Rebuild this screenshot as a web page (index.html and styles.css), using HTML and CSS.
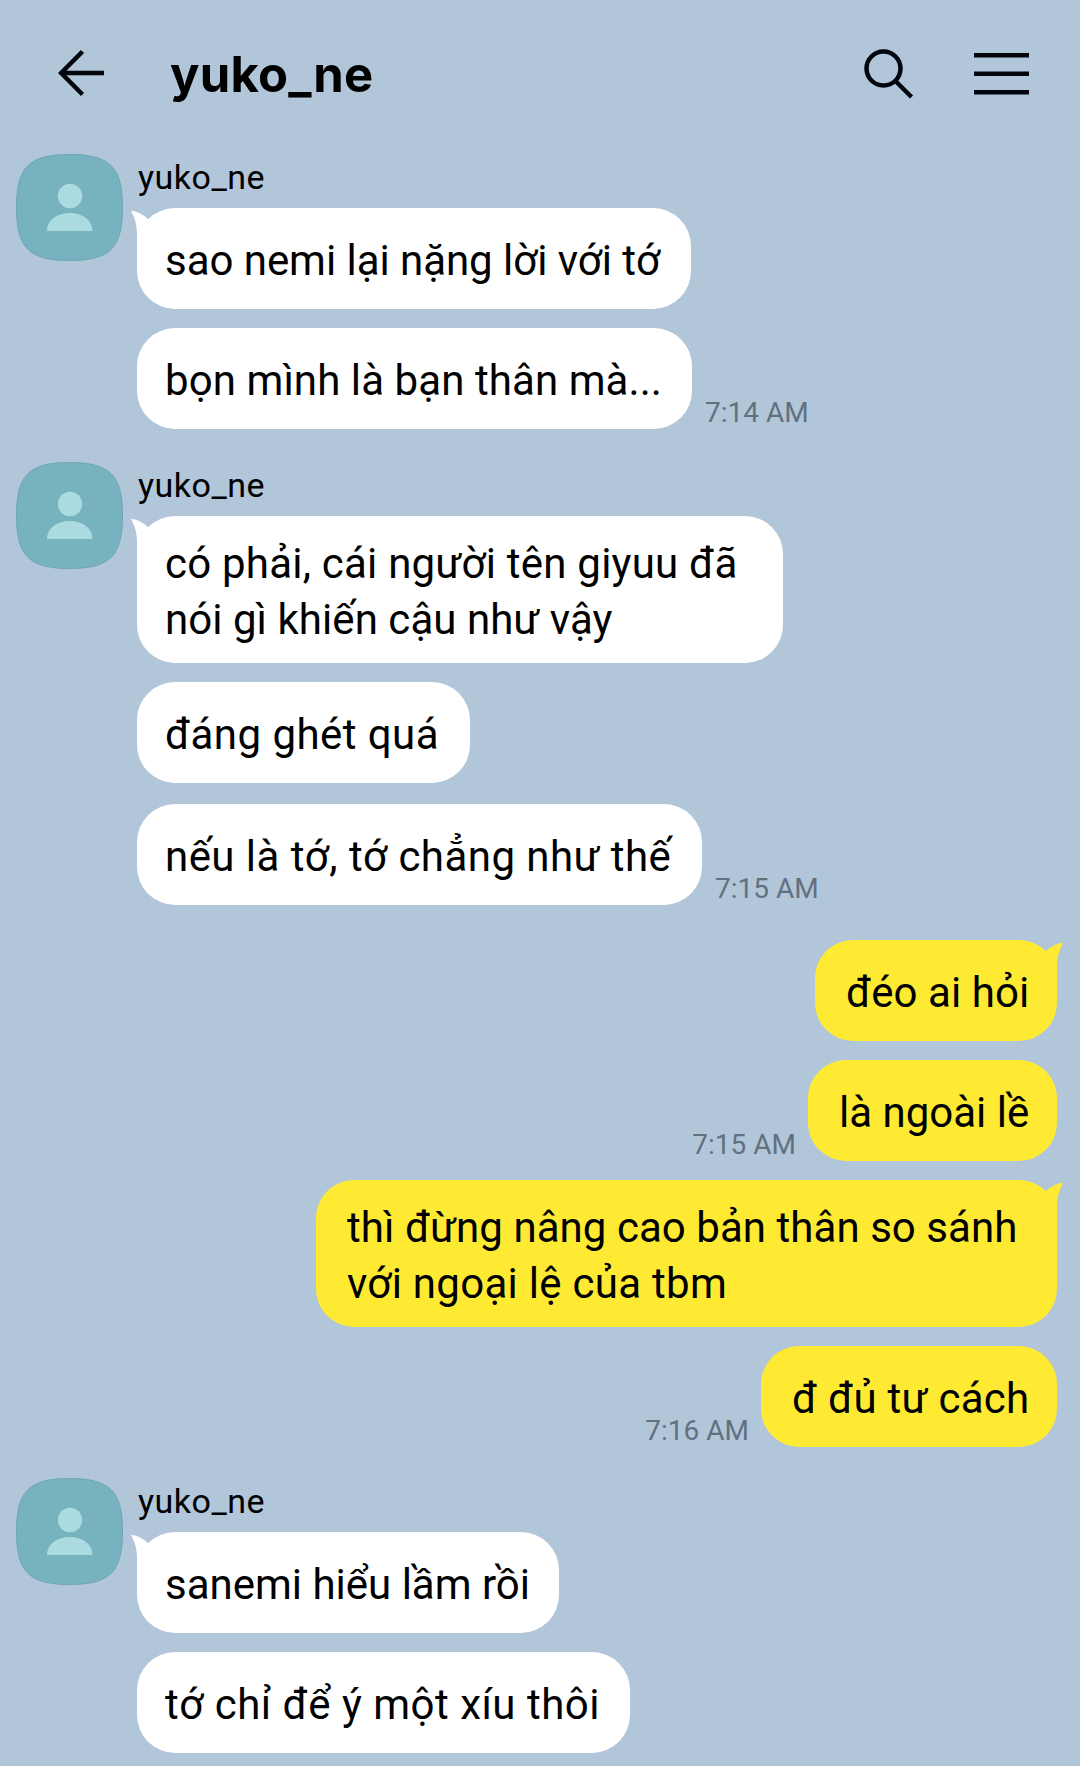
FILE: index.html
```html
<!DOCTYPE html>
<html lang="vi">
<head>
<meta charset="utf-8">
<title>yuko_ne</title>
<link rel="stylesheet" href="styles.css">
</head>
<body>
<svg class="defs" width="0" height="0" aria-hidden="true">
  <symbol id="avatar" viewBox="0 0 107 107">
    <path d="M.5 53.5C.5 13 13 .5 53.5 .5S106.500 13 106.500 53.500 94 106.500 53.500 106.500 .5 94 .5 53.500Z" fill="#76b3be" stroke="#6ea6b5"/>
    <circle cx="54" cy="42" r="12.200" fill="#abdae1"/>
    <path d="M31 77C31 66 41 59 53.700 59S76.400 66 76.400 77Z" fill="#abdae1"/>
  </symbol>
  <symbol id="tail" viewBox="0 0 18 38">
    <path d="M.8 2.700Q10 3.500 18 11V38H7V24Q6.500 12 .8 2.700Z"/>
  </symbol>
</svg>

<header class="topbar">
  <svg class="back" viewBox="0 0 48 48"><path d="M47 24H4M25.500 2.500L4.200 24L25.500 45.500"/></svg>
  <h1 class="title">yuko_ne</h1>
  <svg class="search" viewBox="0 0 52 52"><circle cx="20.500" cy="20.500" r="17"/><path d="M33 33.500L48.500 49"/></svg>
  <svg class="menu" viewBox="0 0 56 44"><path d="M1 3.300H56M1 21.700H56M1 40.200H56"/></svg>
</header>

<main class="chat">
  <section class="group">
    <svg class="avatar"><use href="#avatar"/></svg>
    <div class="stack">
      <div class="name">yuko_ne</div>
      <div class="row"><p class="bubble m1"><svg class="tail"><use href="#tail"/></svg>sao nemi lại nặng lời với tớ</p></div>
      <div class="row"><p class="bubble m2">bọn mình là bạn thân mà...</p><time>7:14 AM</time></div>
    </div>
  </section>

  <section class="group">
    <svg class="avatar"><use href="#avatar"/></svg>
    <div class="stack">
      <div class="name">yuko_ne</div>
      <div class="row"><p class="bubble tall m3"><svg class="tail"><use href="#tail"/></svg>có phải, cái người tên giyuu đã<br><span class="tight">nói gì khiến cậu như vậy</span></p></div>
      <div class="row"><p class="bubble m4">đáng ghét quá</p></div>
      <div class="row last"><p class="bubble m5">nếu là tớ, tớ chẳng như thế</p><time>7:15 AM</time></div>
    </div>
  </section>

  <section class="group mine">
    <div class="row"><p class="bubble m6"><svg class="tail"><use href="#tail"/></svg>đéo ai hỏi</p></div>
    <div class="row"><time>7:15 AM</time><p class="bubble m7">là ngoài lề</p></div>
    <div class="row"><p class="bubble tall m8"><svg class="tail"><use href="#tail"/></svg>thì đừng nâng cao bản thân so sánh<br><span class="wide">với ngoại lệ của tbm</span></p></div>
    <div class="row"><time>7:16 AM</time><p class="bubble m9">đ đủ tư cách</p></div>
  </section>

  <section class="group">
    <svg class="avatar"><use href="#avatar"/></svg>
    <div class="stack">
      <div class="name">yuko_ne</div>
      <div class="row"><p class="bubble m10"><svg class="tail"><use href="#tail"/></svg>sanemi hiểu lầm rồi</p></div>
      <div class="row"><p class="bubble m11">tớ chỉ để ý một xíu thôi</p></div>
    </div>
  </section>
</main>
</body>
</html>
```
FILE: styles.css
```css
* { box-sizing: border-box; }

body {
  margin: 0;
  height: 1766px;
  overflow: hidden;
  background: #b2c6da;
  color: #000;
  font-family: Roboto, "Noto Sans", sans-serif;
}

.defs { position: absolute; }

/* Top bar */
.topbar {
  display: flex;
  align-items: center;
  height: 146px;
  padding: 0 51px 0 57px;
}

.topbar svg {
  flex: none;
  fill: none;
  stroke: #02060c;
  stroke-width: 4.5;
}

.back { width: 48px; height: 48px; }

.title {
  flex: 1;
  margin: 4px 0 0 65px;
  font: 700 49px/60px Inter, sans-serif;
  letter-spacing: 0.2px;
}

.search { width: 52px; height: 52px; margin: 2px 58px 0 0; }
.menu { width: 56px; height: 44px; margin-top: 2px; }

/* Conversation */
.chat {
  display: flex;
  flex-direction: column;
  gap: 33px;
  padding-top: 8px;
}

.group {
  display: flex;
  gap: 14px;
  padding-left: 16px;
}

.avatar { flex: none; width: 107px; height: 107px; }

.stack {
  display: flex;
  flex-direction: column;
  gap: 19px;
}

.name {
  height: 35px;
  padding: 3px 0 0 1px;
  font-size: 34px;
  line-height: 40px;
  letter-spacing: 0.5px;
}

.row {
  display: flex;
  align-items: flex-end;
  gap: 13px;
}

.row.last { margin-top: 2px; }

.bubble {
  position: relative;
  height: 101px;
  margin: 0;
  padding: 25px 0 0 28px;
  border-radius: 38px;
  background: #fff;
  font-size: 42px;
  line-height: 56px;
  white-space: nowrap;
}

.bubble.tall { height: 147px; padding-top: 20px; }

.tail {
  position: absolute;
  top: 0;
  left: -7px;
  width: 18px;
  height: 38px;
  fill: #fff;
}

time {
  padding-bottom: 2px;
  color: #62717e;
  font-size: 28px;
  line-height: 28px;
}

/* Outgoing messages */
.mine {
  flex-direction: column;
  align-items: flex-end;
  gap: 19px;
  margin-top: 2px;
  padding: 0 23px 0 0;
}

.mine + .group { margin-top: -2px; }
.mine .row { gap: 12px; }
.mine .bubble { padding-left: 31px; background: #feea33; }
.mine .tail { left: auto; right: -7px; transform: scaleX(-1); fill: #feea33; }

/* Bubble widths and tracking */
.m1 { width: 554px; letter-spacing: -0.04px; }
.m2 { width: 555px; letter-spacing: 0.08px; }
.m3 { width: 646px; letter-spacing: 0.22px; }
.m3 .tight { letter-spacing: 0.05px; }
.m4 { width: 333px; letter-spacing: 0.45px; }
.m5 { width: 565px; letter-spacing: 0.45px; }
.m6 { width: 242px; letter-spacing: 0.08px; }
.m7 { width: 249px; }
.m8 { width: 741px; letter-spacing: 0.05px; }
.m8 .wide { letter-spacing: 0.28px; }
.m9 { width: 296px; letter-spacing: 0.26px; }
.m10 { width: 422px; }
.m11 { width: 493px; letter-spacing: 0.5px; }
```
